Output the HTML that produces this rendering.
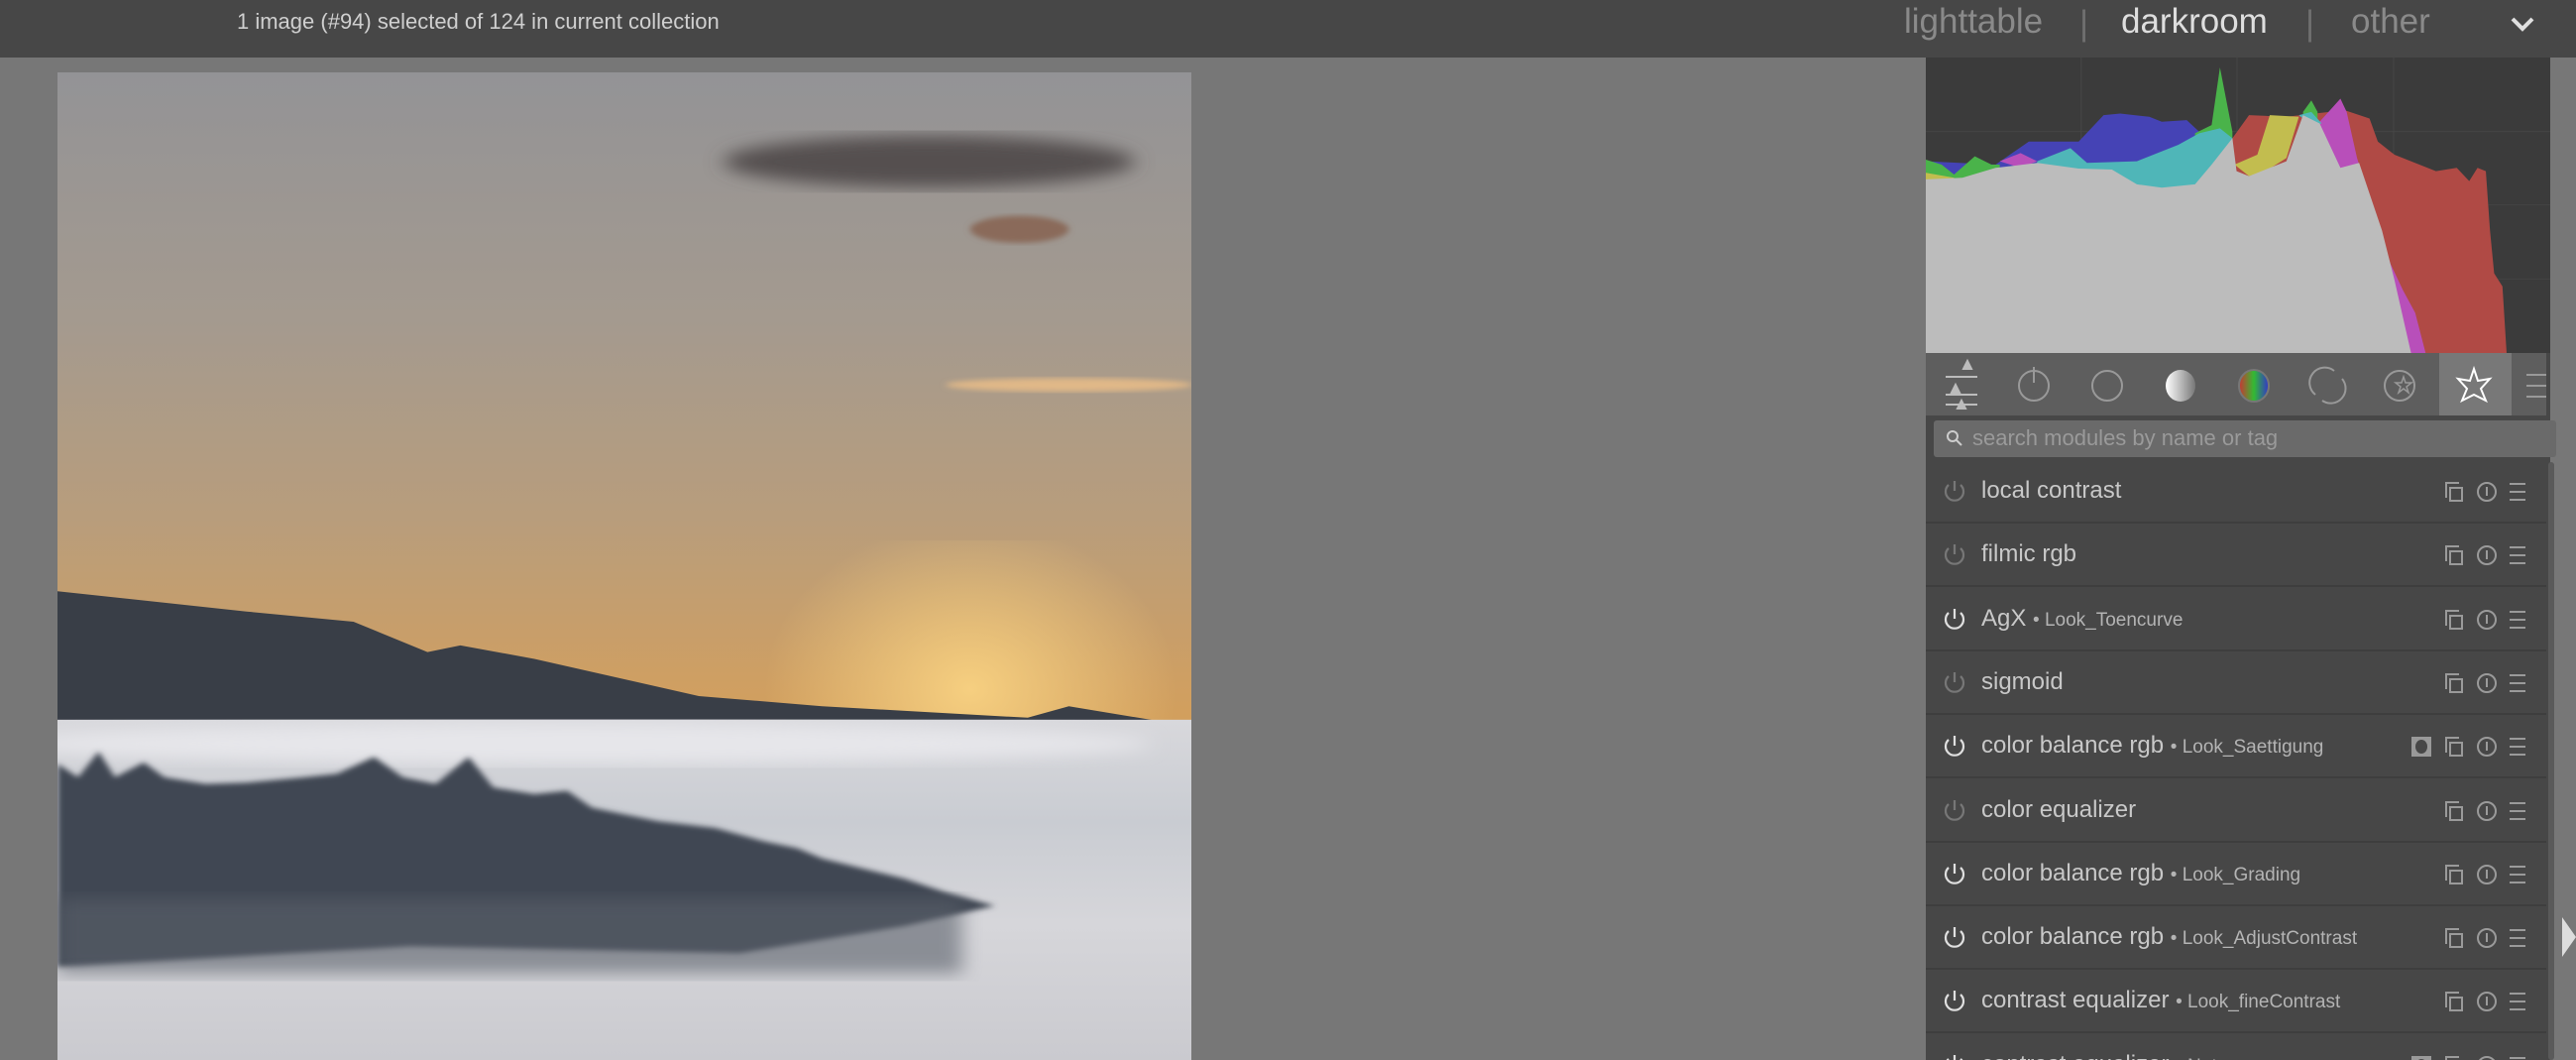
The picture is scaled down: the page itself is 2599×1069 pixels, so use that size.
<!DOCTYPE html>
<html style="width:2599px;height:1069px;overflow:hidden"><head><meta charset="utf-8"><style>
*{margin:0;padding:0;box-sizing:border-box}
body{width:2599px;height:1069px;overflow:hidden;background:#777;font-family:"Liberation Sans",sans-serif}
#wrap{position:relative;width:2599px;height:1069px;overflow:hidden}
.top{position:absolute;left:0;top:0;width:2599px;height:58px;background:#474747}
.abs{position:absolute;white-space:nowrap}
.panel{position:absolute;left:1943px;top:58px;width:630px;height:1011px;background:#474747}
.row{position:absolute;left:1943px;width:626px;height:64px;border-bottom:2px solid #3e3e3e;background:#474747}
.row .n{position:absolute;left:56px;top:17px;font-size:24px;color:#c8c8c8}
.row .n small{font-size:19px;color:#b4b4b4}
.row svg{position:absolute}
</style></head><body><div id="wrap">
<div class="top"></div>
<div class="abs" style="left:239px;top:9px;font-size:22px;color:#cfcfcf">1 image (#94) selected of 124 in current collection</div>
<div class="abs" style="left:1921px;top:2px;font-size:35px;color:#8a8a8a">lighttable</div>
<div class="abs" style="left:2098px;top:4px;font-size:35px;color:#6f6f6f">|</div>
<div class="abs" style="left:2140px;top:2px;font-size:35px;color:#dedede">darkroom</div>
<div class="abs" style="left:2326px;top:4px;font-size:35px;color:#6f6f6f">|</div>
<div class="abs" style="left:2372px;top:2px;font-size:35px;color:#8a8a8a">other</div>
<svg class="abs" style="left:2532px;top:14px" width="26" height="20" viewBox="0 0 26 20"><path d="M3 5 L13 15 L23 5" stroke="#e0e0e0" stroke-width="4" fill="none"/></svg>

<svg class="abs" style="left:58px;top:73px" width="1144" height="996" viewBox="70 108 1379 1460" preserveAspectRatio="none">
<defs>
<linearGradient id="sky" x1="0" y1="0" x2="0" y2="1"><stop offset="0" stop-color="#939396"/><stop offset=".25" stop-color="#a49a8f"/><stop offset=".45" stop-color="#b89d7c"/><stop offset=".62" stop-color="#cf9f62"/><stop offset=".75" stop-color="#dba04e"/></linearGradient>
<radialGradient id="sun" cx="1180" cy="1020" r="250" gradientUnits="userSpaceOnUse"><stop offset="0" stop-color="#f6cf80"/><stop offset="1" stop-color="#f6cf80" stop-opacity="0"/></radialGradient>
<linearGradient id="fog" x1="0" y1="0" x2="0" y2="1"><stop offset="0" stop-color="#d8d8dc"/><stop offset=".3" stop-color="#c9ccd2"/><stop offset=".6" stop-color="#d6d6da"/><stop offset="1" stop-color="#cacacf"/></linearGradient>
<filter id="b"><feGaussianBlur stdDeviation="12"/></filter>
<filter id="b2"><feGaussianBlur stdDeviation="4"/></filter>
</defs>
<rect x="70" y="108" width="1379" height="1460" fill="url(#sky)"/>
<rect x="800" y="800" width="649" height="300" fill="url(#sun)"/>
<ellipse cx="1130" cy="240" rx="250" ry="38" fill="#55504f" filter="url(#b)"/>
<ellipse cx="1240" cy="340" rx="60" ry="20" fill="#8a6a5a" filter="url(#b2)"/>
<ellipse cx="1300" cy="570" rx="150" ry="10" fill="#e0b888" filter="url(#b2)"/>
<path d="M70 875 L300 905 L430 920 L520 965 L560 955 L650 975 L850 1030 L1000 1045 L1250 1062 L1300 1045 L1449 1075 L1449 1110 L70 1110Z" fill="#393e47"/>
<rect x="70" y="1065" width="1379" height="503" fill="url(#fog)"/>
<ellipse cx="700" cy="1100" rx="700" ry="30" fill="#e6e6ea" filter="url(#b)"/>
<path d="M70 1130 L95 1150 L120 1112 L140 1150 L175 1128 L200 1150 L250 1160 L300 1158 L370 1150 L410 1145 L455 1120 L490 1150 L530 1160 L570 1120 L600 1165 L650 1175 L690 1170 L720 1195 L800 1215 L870 1225 L930 1245 L970 1255 L1000 1270 L1050 1285 L1100 1300 L1150 1320 L1210 1340 L1100 1370 L900 1410 L500 1400 L70 1430Z" fill="#3f4652" filter="url(#b2)"/>
<rect x="70" y="1330" width="1100" height="110" fill="#5a606a" filter="url(#b)" opacity=".6"/>
</svg>

<div class="panel"></div>
<svg class="abs" style="left:1943px;top:58px" width="630" height="298" viewBox="32 175 1503 897" preserveAspectRatio="none">
<rect x="32" y="175" width="1503" height="897" fill="#3b3b3b"/>
<g stroke="#484848" stroke-width="2"><path d="M406 175V1072M781 175V1072M1158 175V1072M32 400H1535M32 623H1535M32 848H1535"/></g>
<path d="M770 420 L810 350 L900 355 L1040 335 L1100 360 L1120 430 L1160 470 L1260 520 L1310 510 L1340 550 L1360 510 L1380 520 L1390 700 L1400 830 L1420 870 L1430 1072 L770 1072Z" fill="#b04a45"/>
<path d="M980 370 L1030 300 L1045 340 L1070 480 L1100 600 L1150 800 L1180 880 L1210 950 L1235 1072 L980 1072Z" fill="#b84fba"/>
<path d="M32 490 L200 500 L280 430 L400 430 L460 350 L500 345 L570 355 L600 370 L660 365 L690 400 L730 390 L770 420 L770 1072 L32 1072Z" fill="#4543b5"/>
<path d="M32 485 L70 500 L100 530 L150 475 L190 500 L210 500 L210 1072 L32 1072Z" fill="#4ab34a"/>
<path d="M680 405 L720 380 L740 205 L770 400 L770 1072 L680 1072Z" fill="#4ab34a"/>
<path d="M940 340 L960 305 L975 340 L975 1072 L940 1072Z" fill="#4ab34a"/>
<path d="M32 525 L100 540 L100 1072 L32 1072Z" fill="#c2bd4f"/>
<path d="M775 500 L830 470 L860 350 L930 355 L900 480 L850 520 L810 535Z" fill="#c2bd4f"/>
<path d="M210 490 L260 465 L300 490 L260 510Z" fill="#b84fba"/>
<path d="M300 490 L380 450 L420 495 L540 490 L640 440 L690 405 L740 390 L770 420 L770 1072 L300 1072Z" fill="#4fb6b8"/>
<path d="M930 350 L960 340 L985 375 L960 380Z" fill="#4fb6b8"/>
<path d="M32 545 L120 540 L200 510 L300 495 L400 512 L480 515 L540 560 L600 570 L680 560 L720 500 L770 420 L780 520 L810 535 L900 490 L940 350 L980 375 L1030 510 L1075 495 L1130 700 L1160 850 L1200 1072 L32 1072Z" fill="#bcbcbc"/>
</svg>

<div class="abs" style="left:1943px;top:356px;width:626px;height:63px;background:#5e5e5e"></div>
<div class="abs" style="left:2461px;top:356px;width:73px;height:63px;background:#787878"></div>
<svg class="abs" style="left:1943px;top:356px" width="626" height="63" viewBox="0 0 626 63" fill="none" stroke="#bcbcbc" stroke-width="2">
<path d="M20 24H52M20 42H52M20 52H52"/><path d="M38 16l4 -8 4 8zM26 40l4-8 4 8zM32 56l4-8 4 8z" fill="#bcbcbc"/>
<circle cx="109" cy="33" r="15" stroke="#999"/><path d="M109 14V30" stroke="#999"/>
<circle cx="183" cy="33" r="15" stroke="#999"/>
<defs><linearGradient id="g1"><stop offset="0" stop-color="#fff"/><stop offset="1" stop-color="#777"/></linearGradient>
<linearGradient id="g2"><stop offset="0" stop-color="#c33"/><stop offset=".5" stop-color="#3b3"/><stop offset="1" stop-color="#33c"/></linearGradient></defs>
<ellipse cx="257" cy="33" rx="15" ry="16" fill="url(#g1)" stroke="none"/>
<ellipse cx="331" cy="33" rx="15" ry="16" fill="url(#g2)" stroke="#777"/>
<path d="M393 42A15 15 0 0 1 412 18M420 26A15 15 0 0 1 400 48" stroke="#999"/>
<circle cx="478" cy="33" r="15" stroke="#999"/><path d="M482 24l2 6 6 0-5 4 2 6-5-4-5 4 2-6-5-4 6 0z" stroke="#999" stroke-width="1.5"/>
<path d="M553 16l4 12 12-2-9 10 5 12-12-6-12 6 5-12-9-10 12 2z" stroke="#fff"/>
<path d="M606 22H626M606 33H626M606 44H626" stroke="#999"/>
</svg>
<div class="abs" style="left:1951px;top:424px;width:628px;height:37px;background:#6a6a6a;border-radius:3px"></div>
<svg class="abs" style="left:1963px;top:433px" width="18" height="18"><circle cx="7" cy="7" r="5" stroke="#ccc" stroke-width="2" fill="none"/><path d="M11 11l5 5" stroke="#ccc" stroke-width="2"/></svg>
<div class="abs" style="left:1990px;top:429px;font-size:22px;color:#9a9a9a">search modules by name or tag</div>
<div class="abs" style="left:2571px;top:466px;width:6px;height:603px;background:#5a5a5a;border-radius:3px"></div>
<svg class="abs" style="left:2585px;top:925px" width="14" height="40"><path d="M0 0L14 20L0 40Z" fill="#ddd"/></svg>

<div id="rows"></div>
</div>
<script>
var rows=[["local contrast","",0,0],["filmic rgb","",0,0],["AgX","Look_Toencurve",1,0],["sigmoid","",0,0],["color balance rgb","Look_Saettigung",1,1],["color equalizer","",0,0],["color balance rgb","Look_Grading",1,0],["color balance rgb","Look_AdjustContrast",1,0],["contrast equalizer","Look_fineContrast",1,0],["contrast equalizer","Natur",1,1]];
var h="";
rows.forEach(function(r,i){var y=464+i*64.3;var pc=r[2]?"#e0e0e0":"#777";
h+='<div class="row" style="top:'+y+'px"><svg style="left:16px;top:18px" width="26" height="26" viewBox="0 0 26 26" fill="none" stroke="'+pc+'" stroke-width="2.2"><path d="M7 7A9 9 0 1 0 19 7"/><path d="M13 3V13"/></svg>'+
'<div class="n">'+r[0]+(r[1]?' <small>&bull; '+r[1]+'</small>':'')+'</div>'+
(r[3]?'<svg style="left:490px;top:22px" width="20" height="20"><rect x="0" y="0" width="20" height="20" fill="#999"/><ellipse cx="10" cy="10" rx="6" ry="7" fill="#474747"/></svg>':'')+
'<svg style="left:522px;top:20px" width="100" height="26" fill="none" stroke="#9a9a9a" stroke-width="2"><path d="M3 18V3H16"/><rect x="7" y="8" width="12" height="13"/><circle cx="44" cy="12" r="9"/><path d="M44 7V16"/><path d="M67 4H83M67 12H83M67 20H83"/></svg></div>';});
document.getElementById("rows").innerHTML=h;
</script>
</body></html>
